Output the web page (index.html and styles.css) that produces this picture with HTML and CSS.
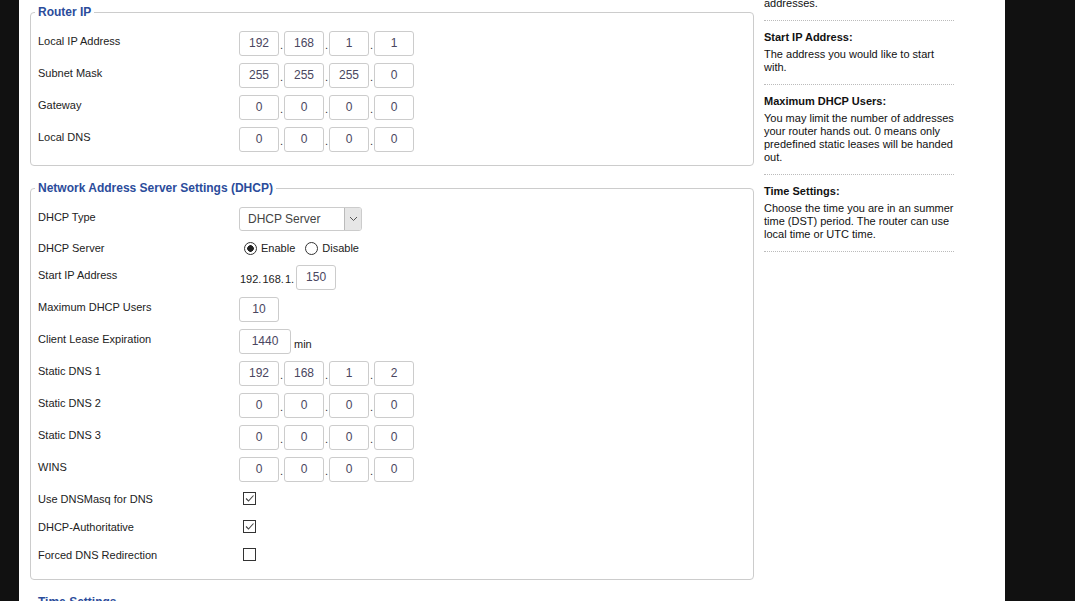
FILE: index.html
```html
<!DOCTYPE html>
<html lang="en">
<head>
    <meta charset="UTF-8">
    <meta name="viewport" content="width=device-width, initial-scale=1.0">
    <title>Setup - Basic Setup</title>
    <link rel="stylesheet" href="styles.css">
</head>
<body>
    <div class="page">
        <div class="main">
            <!-- Router IP -->
            <fieldset class="box">
                <legend>Router IP</legend>
                <div class="row">
                    <div class="label">Local IP Address</div>
                    <div class="field">
                        <span class="num">192</span><span class="dot">.</span><span class="num">168</span><span class="dot">.</span><span class="num">1</span><span class="dot">.</span><span class="num">1</span>
                    </div>
                </div>
                <div class="row">
                    <div class="label">Subnet Mask</div>
                    <div class="field">
                        <span class="num">255</span><span class="dot">.</span><span class="num">255</span><span class="dot">.</span><span class="num">255</span><span class="dot">.</span><span class="num">0</span>
                    </div>
                </div>
                <div class="row">
                    <div class="label">Gateway</div>
                    <div class="field">
                        <span class="num">0</span><span class="dot">.</span><span class="num">0</span><span class="dot">.</span><span class="num">0</span><span class="dot">.</span><span class="num">0</span>
                    </div>
                </div>
                <div class="row">
                    <div class="label">Local DNS</div>
                    <div class="field">
                        <span class="num">0</span><span class="dot">.</span><span class="num">0</span><span class="dot">.</span><span class="num">0</span><span class="dot">.</span><span class="num">0</span>
                    </div>
                </div>
            </fieldset>

            <!-- DHCP -->
            <fieldset class="box">
                <legend>Network Address Server Settings (DHCP)</legend>
                <div class="row row-select">
                    <div class="label">DHCP Type</div>
                    <div class="field">
                        <div class="select">
                            <span class="select-text">DHCP Server</span>
                            <span class="select-arrow">
                                <svg width="9" height="6" viewBox="0 0 9 6"><path d="M1 1 L4.5 4.5 L8 1" fill="none" stroke="#555" stroke-width="1"/></svg>
                            </span>
                        </div>
                    </div>
                </div>
                <div class="row row-small">
                    <div class="label">DHCP Server</div>
                    <div class="field">
                        <label class="opt"><input type="radio" name="dhcp" checked> Enable</label>
                        <label class="opt"><input type="radio" name="dhcp"> Disable</label>
                    </div>
                </div>
                <div class="row">
                    <div class="label">Start IP Address</div>
                    <div class="field">
                        <span class="prefix">192. 168. 1.</span><span class="num">150</span>
                    </div>
                </div>
                <div class="row">
                    <div class="label">Maximum DHCP Users</div>
                    <div class="field"><span class="num">10</span></div>
                </div>
                <div class="row">
                    <div class="label">Client Lease Expiration</div>
                    <div class="field"><span class="num num-wide">1440</span><span class="unit">min</span></div>
                </div>
                <div class="row">
                    <div class="label">Static DNS 1</div>
                    <div class="field">
                        <span class="num">192</span><span class="dot">.</span><span class="num">168</span><span class="dot">.</span><span class="num">1</span><span class="dot">.</span><span class="num">2</span>
                    </div>
                </div>
                <div class="row">
                    <div class="label">Static DNS 2</div>
                    <div class="field">
                        <span class="num">0</span><span class="dot">.</span><span class="num">0</span><span class="dot">.</span><span class="num">0</span><span class="dot">.</span><span class="num">0</span>
                    </div>
                </div>
                <div class="row">
                    <div class="label">Static DNS 3</div>
                    <div class="field">
                        <span class="num">0</span><span class="dot">.</span><span class="num">0</span><span class="dot">.</span><span class="num">0</span><span class="dot">.</span><span class="num">0</span>
                    </div>
                </div>
                <div class="row">
                    <div class="label">WINS</div>
                    <div class="field">
                        <span class="num">0</span><span class="dot">.</span><span class="num">0</span><span class="dot">.</span><span class="num">0</span><span class="dot">.</span><span class="num">0</span>
                    </div>
                </div>
                <div class="row row-check">
                    <div class="label">Use DNSMasq for DNS</div>
                    <div class="field">
                        <span class="check"><svg width="11" height="11" viewBox="0 0 11 11"><path d="M2 5.5 L4.5 8 L9.5 2.5" fill="none" stroke="#444" stroke-width="1.1"/></svg></span>
                    </div>
                </div>
                <div class="row row-check">
                    <div class="label">DHCP-Authoritative</div>
                    <div class="field">
                        <span class="check"><svg width="11" height="11" viewBox="0 0 11 11"><path d="M2 5.5 L4.5 8 L9.5 2.5" fill="none" stroke="#444" stroke-width="1.1"/></svg></span>
                    </div>
                </div>
                <div class="row row-check">
                    <div class="label">Forced DNS Redirection</div>
                    <div class="field">
                        <span class="check"></span>
                    </div>
                </div>
            </fieldset>

            <fieldset class="box">
                <legend>Time Settings</legend>
                <div class="row">
                    <div class="label">NTP Client</div>
                </div>
            </fieldset>
        </div>

        <!-- help column -->
        <div class="help">
            <div class="help-item help-first">
                <p>addresses.</p>
            </div>
            <div class="help-item">
                <h4>Start IP Address:</h4>
                <p>The address you would like to start with.</p>
            </div>
            <div class="help-item">
                <h4>Maximum DHCP Users:</h4>
                <p>You may limit the number of addresses your router hands out. 0 means only predefined static leases will be handed out.</p>
            </div>
            <div class="help-item">
                <h4>Time Settings:</h4>
                <p>Choose the time you are in an summer time (DST) period. The router can use local time or UTC time.</p>
            </div>
        </div>
    </div>
</body>
</html>
```

FILE: styles.css
```css
html, body {
    margin: 0;
    padding: 0;
    height: 100%;
    overflow: hidden;
}
body {
    background-color: #111;
    font-family: "Liberation Sans", Arial, sans-serif;
    font-size: 11px;
    color: #222;
}
.page {
    width: 986px;
    margin-left: 19px;
    min-height: 100%;
    background-color: #fff;
    display: flex;
    align-items: flex-start;
    gap: 10px;
    padding: 6px 0 0 11px;
    box-sizing: border-box;
}
.main {
    width: 724px;
}
.box {
    margin: 0 0 16px 0;
    border: 1px solid #ccc;
    border-radius: 4px;
    padding: 12px 7px 13px;
}
.box legend {
    font-size: 12px;
    font-weight: bold;
    line-height: 13px;
    color: #2b4c9b;
    padding: 0 3px;
    margin-left: -3px;
}
.row {
    display: flex;
    align-items: flex-start;
    margin-bottom: 7px;
    height: 25px;
}
.row:last-child {
    margin-bottom: 0;
}
.row-select {
    height: 24px;
}
.row-small {
    height: 20px;
}
.row-check {
    height: 21px;
}
.label {
    width: 201px;
    padding-top: 4px;
    line-height: 13px;
}
.field {
    display: flex;
    align-items: center;
    height: 100%;
}
.num {
    display: inline-block;
    width: 40px;
    height: 25px;
    line-height: 23px;
    box-sizing: border-box;
    border: 1px solid #ccc;
    border-radius: 3px;
    text-align: center;
    font-size: 12px;
    color: #4a4660;
}
.num-wide {
    width: 52px;
}
.dot {
    width: 5px;
    text-align: center;
    font-size: 11px;
    color: #333;
    line-height: 13px;
    padding-top: 3px;
}
.prefix {
    margin-left: 1px;
    margin-right: 2px;
    font-size: 11px;
    word-spacing: -2px;
    padding-top: 2px;
}
.unit {
    margin-left: 3px;
    padding-top: 5px;
}
.select {
    display: flex;
    width: 123px;
    height: 24px;
    box-sizing: border-box;
    border: 1px solid #ccc;
    border-radius: 3px;
    font-size: 12px;
    color: #444;
}
.select-text {
    flex: 1;
    padding-left: 8px;
    line-height: 22px;
}
.select-arrow {
    width: 16px;
    background-color: #e6e6e6;
    border-left: 1px solid #bbb;
    display: flex;
    align-items: center;
    justify-content: center;
    border-radius: 0 2px 2px 0;
}
.opt {
    display: inline-flex;
    align-items: center;
    margin-left: 5px;
    margin-right: 5px;
    font-size: 11px;
}
.opt input {
    -webkit-appearance: none;
    appearance: none;
    width: 13px;
    height: 13px;
    margin: 0 4px 0 0;
    border: 1px solid #333;
    border-radius: 50%;
    background-color: #fff;
}
.opt input:checked {
    background: radial-gradient(circle, #222 0, #222 3px, #fff 3.6px);
}
.check {
    display: inline-flex;
    align-items: center;
    justify-content: center;
    width: 13px;
    height: 13px;
    box-sizing: border-box;
    border: 1px solid #333;
    margin-left: 4px;
    margin-top: -2px;
    background-color: #fff;
}
.help {
    width: 190px;
    margin-top: -9px;
    color: #111;
}
.help-item {
    padding: 10px 0;
    border-bottom: 1px dotted #bbb;
    line-height: 13px;
}
.help-first {
    padding-top: 0;
}
.help h4 {
    margin: 0 0 4px 0;
    font-size: 11px;
    line-height: 13px;
    font-weight: bold;
}
.help p {
    margin: 0;
}
```
